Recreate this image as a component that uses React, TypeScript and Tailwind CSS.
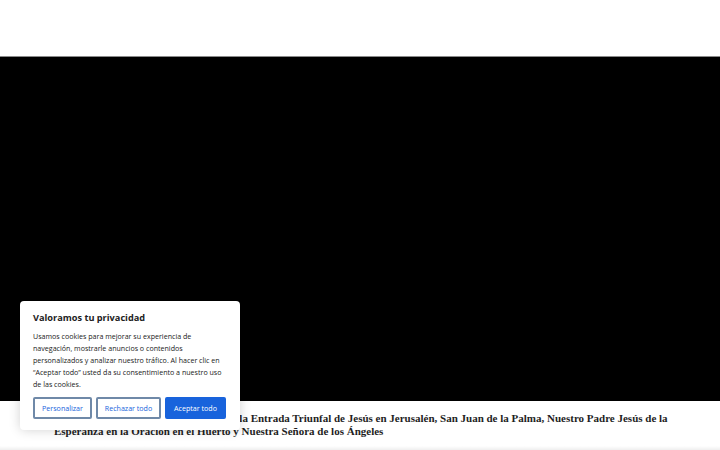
import React from "react";

const CookieBanner = () => {
  return (
    <div className="absolute left-[20px] top-[301px] w-[220px] rounded-[4px] bg-white px-[13px] pt-[10px] pb-[11px] shadow-[0_0_12px_rgba(0,0,0,0.18)] font-['Open_Sans',sans-serif]">
      <h2 className="text-[9.2px] font-bold leading-[14px] text-[#212121]">
        Valoramos tu privacidad
      </h2>
      <p className="mt-[5px] text-[7.1px] leading-[12px] text-[#212121]">
        Usamos cookies para mejorar su experiencia de navegación, mostrarle
        anuncios o contenidos personalizados y analizar nuestro tráfico. Al
        hacer clic en “Aceptar todo” usted da su consentimiento a nuestro uso
        de las cookies.
      </p>
      <div className="mt-[7px] flex gap-[4px]">
        <button className="h-[22px] w-[59px] rounded-[2px] border-2 border-[#6f89a8] text-[7.1px] text-[#1863dc]">
          Personalizar
        </button>
        <button className="h-[22px] w-[65px] rounded-[2px] border-2 border-[#6f89a8] text-[7.1px] text-[#1863dc]">
          Rechazar todo
        </button>
        <button className="h-[22px] w-[61px] rounded-[2px] border-2 border-[#1863dc] bg-[#1863dc] text-[7.1px] text-white">
          Aceptar todo
        </button>
      </div>
    </div>
  );
};

const App = () => {
  return (
    <div className="relative h-[450px] w-[720px] overflow-hidden bg-white">
      <header className="h-[57px] border-b border-[#8a8a8a] bg-white" />
      <div className="h-[344px] bg-black" />
      <div className="px-[54px] pt-[11px]">
        <h1 className="w-[622px] text-[11px] font-bold leading-[13px] text-[#1e1e1e] font-['Liberation_Serif',serif]">
          Venerable Hermandad Sacramental de la Entrada Triunfal de Jesús en
          Jerusalén, San Juan de la Palma, Nuestro Padre Jesús de la Esperanza
          en la Oración en el Huerto y Nuestra Señora de los Ángeles
        </h1>
      </div>
      <div className="absolute bottom-0 left-0 h-[4px] w-full bg-gradient-to-b from-white to-[#efefef]" />
      <CookieBanner />
    </div>
  );
};

export default App;
